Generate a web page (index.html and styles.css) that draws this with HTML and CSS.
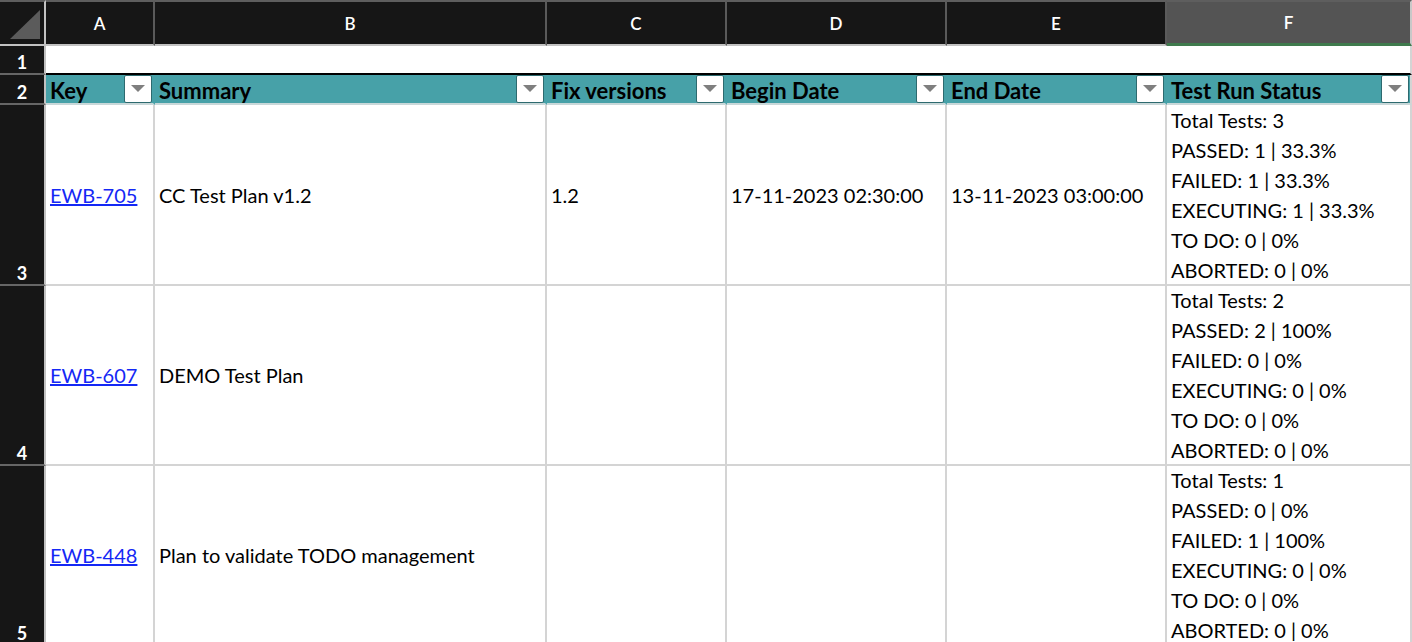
FILE: index.html
```html
<!DOCTYPE html>
<html lang="en">
<head>
    <meta charset="UTF-8">
    <meta name="viewport" content="width=device-width, initial-scale=1.0">
    <title>Test Plans</title>
    <link rel="stylesheet" href="styles.css">
</head>
<body>
    <div class="sheet">
        <div class="corner">
            <svg width="44" height="42" viewBox="0 0 44 42"><polygon points="10,37 40,37 40,8" fill="#5b5b5b"/></svg>
        </div>
        <div class="col-head">A</div>
        <div class="col-head">B</div>
        <div class="col-head">C</div>
        <div class="col-head">D</div>
        <div class="col-head">E</div>
        <div class="col-head active">F</div>

        <div class="row-head">1</div>
        <div class="blank-row"></div>

        <div class="row-head">2</div>
        <div class="th"><span>Key</span><span class="filter"></span></div>
        <div class="th"><span>Summary</span><span class="filter"></span></div>
        <div class="th"><span>Fix versions</span><span class="filter"></span></div>
        <div class="th"><span>Begin Date</span><span class="filter"></span></div>
        <div class="th"><span>End Date</span><span class="filter"></span></div>
        <div class="th last"><span>Test Run Status</span><span class="filter"></span></div>

        <div class="row-head">3</div>
        <div class="td"><a href="#">EWB-705</a></div>
        <div class="td">CC Test Plan v1.2</div>
        <div class="td">1.2</div>
        <div class="td">17-11-2023 02:30:00</div>
        <div class="td">13-11-2023 03:00:00</div>
        <div class="td status">
            <div>Total Tests: 3</div>
            <div>PASSED: 1 | 33.3%</div>
            <div>FAILED: 1 | 33.3%</div>
            <div>EXECUTING: 1 | 33.3%</div>
            <div>TO DO: 0 | 0%</div>
            <div>ABORTED: 0 | 0%</div>
        </div>

        <div class="row-head">4</div>
        <div class="td"><a href="#">EWB-607</a></div>
        <div class="td">DEMO Test Plan</div>
        <div class="td"></div>
        <div class="td"></div>
        <div class="td"></div>
        <div class="td status">
            <div>Total Tests: 2</div>
            <div>PASSED: 2 | 100%</div>
            <div>FAILED: 0 | 0%</div>
            <div>EXECUTING: 0 | 0%</div>
            <div>TO DO: 0 | 0%</div>
            <div>ABORTED: 0 | 0%</div>
        </div>

        <div class="row-head">5</div>
        <div class="td"><a href="#">EWB-448</a></div>
        <div class="td">Plan to validate TODO management</div>
        <div class="td"></div>
        <div class="td"></div>
        <div class="td"></div>
        <div class="td status">
            <div>Total Tests: 1</div>
            <div>PASSED: 0 | 0%</div>
            <div>FAILED: 1 | 100%</div>
            <div>EXECUTING: 0 | 0%</div>
            <div>TO DO: 0 | 0%</div>
            <div>ABORTED: 0 | 0%</div>
        </div>
    </div>
</body>
</html>
```

FILE: styles.css
```css
* { box-sizing: border-box; }
html, body { margin: 0; padding: 0; background: #fff; overflow: hidden; }
body { font-family: Lato, "Open Sans", sans-serif; font-size: 20px; color: #000; }

.sheet {
    display: grid;
    grid-template-columns: 46px 109px 392px 180px 220px 220px 245px;
    grid-template-rows: 46px 29px 30px 181px 180px 180px;
    width: 1412px;
}

/* column letters */
.corner, .col-head {
    background: #161616;
    border-top: 2px solid #5e5e5e;
    border-bottom: 2px solid #c2c2c2;
}
.corner { border-right: 2px solid #c2c2c2; }
.corner svg { display: block; }
.col-head {
    display: flex; align-items: center; justify-content: center;
    color: #fff; font-size: 17px; font-weight: 600;
    border-right: 2px solid #5a5a5a;
}
.col-head.active { background: #545454; border-bottom: 3px solid #3f7a4d; border-right: 2px solid #c8c8c8; }

/* row numbers */
.row-head {
    display: flex; align-items: flex-end; justify-content: center;
    padding-bottom: 0;
    background: #161616; color: #fff; font-size: 18px; font-weight: 700;
    border-right: 2px solid #c2c2c2;
    border-bottom: 2px solid #666;
}

.blank-row {
    grid-column: span 6;
    border-bottom: 2px solid #000;
    border-right: 2px solid #d4d4d4;
}

/* table header */
.th {
    display: flex; align-items: center; justify-content: space-between;
    background: #47a1a8; font-size: 22px; font-weight: 700;
    padding-left: 4px; padding-right: 1px;
    border-bottom: 2px solid #c9d8d9;
    border-right: 2px solid #47a1a8;
}
.th span:first-child { margin-top: 2px; }
.th.last { border-right-color: #d4d4d4; }
.filter {
    width: 28px; height: 28px; margin-top: -1px;
    background: #fff; border: 1px solid #2d6a6f; border-radius: 2px;
    display: flex; align-items: center; justify-content: center;
}
.filter::after {
    content: ""; border-left: 7px solid transparent; border-right: 7px solid transparent;
    border-top: 7px solid #7f7f7f;
}

/* data */
.td {
    display: flex; align-items: center;
    padding-left: 4px; overflow: hidden; white-space: nowrap;
    border-right: 2px solid #d4d4d4;
    border-bottom: 2px solid #d4d4d4;
}
.td a { color: #1428f5; }
.status { flex-direction: column; align-items: flex-start; justify-content: center; line-height: 30px; }
```
